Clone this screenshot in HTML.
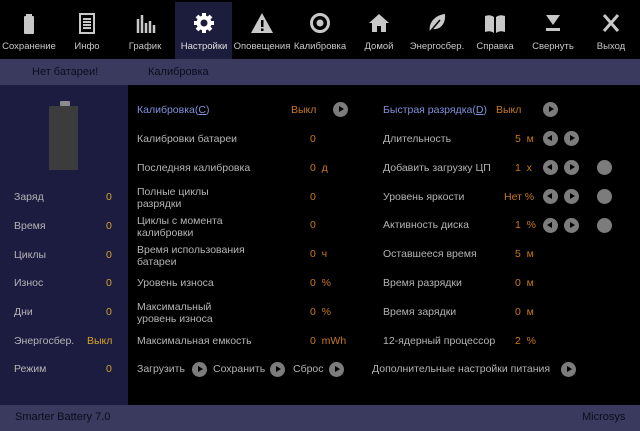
<!DOCTYPE html>
<html><head><meta charset="utf-8"><style>
*{margin:0;padding:0;box-sizing:border-box}
body{width:640px;height:429px;background:#000;position:relative;overflow:hidden;font-family:"Liberation Sans",sans-serif;font-size:10.5px;color:#b4b4b4}
.a{position:absolute;white-space:nowrap}
.tb{position:absolute;top:0;height:57px;width:58px;text-align:center;font-family:"Liberation Sans",sans-serif;font-size:9.5px;color:#c8c8c8}
.tb span{position:absolute;top:39px;left:-10px;right:-10px;text-align:center}
.tb svg{position:absolute;left:17px;top:9px}
.o{color:#c8781e}
.y{color:#d4a428}
.b{color:#8090dc}
.btn{position:absolute;width:15px;height:15px;border-radius:50%;background:#7c7c7c}
.btn.r::after{content:"";position:absolute;left:6px;top:4px;border-left:5px solid #000;border-top:3.5px solid transparent;border-bottom:3.5px solid transparent}
.btn.l::after{content:"";position:absolute;left:4px;top:4px;border-right:5px solid #000;border-top:3.5px solid transparent;border-bottom:3.5px solid transparent}
.dot{position:absolute;width:15px;height:15px;border-radius:50%;background:#7c7c7c}
.m{margin-top:2px}
</style></head><body>
<div class="a" style="left:175px;top:0;width:57px;height:57px;background:#1c1c3c"></div>
<div class="tb" style="left:0"><svg width="24" height="24"><rect x="9" y="3" width="6" height="3" fill="#c8c8c8"/><rect x="7" y="5" width="10" height="18" rx="1" fill="#c8c8c8"/></svg><span>Сохранение</span></div>
<div class="tb" style="left:58px"><svg width="24" height="24"><rect x="5" y="3" width="14" height="19" fill="none" stroke="#c8c8c8" stroke-width="2"/><path d="M8 8h8M8 11h8M8 14h8M8 17h8" stroke="#c8c8c8" stroke-width="2"/></svg><span>Инфо</span></div>
<div class="tb" style="left:116px"><svg width="24" height="24"><path d="M5 8v14M9 4v18M13 12v10M17 10v12M21 14v8" stroke="#c8c8c8" stroke-width="2.5"/></svg><span>График</span></div>
<div class="tb" style="left:175px;color:#e0e0e0"><svg width="24" height="24" viewBox="0 0 24 24"><g fill="#fff"><circle cx="12" cy="12" r="7.5"/><g stroke="#fff" stroke-width="4"><path d="M12 2v20M2 12h20M5 5l14 14M19 5L5 19"/></g></g><circle cx="12" cy="12" r="3.5" fill="#1c1c3c"/></svg><span>Настройки</span></div>
<div class="tb" style="left:233px"><svg width="24" height="24"><path d="M12 2L23 22H1z" fill="#c8c8c8"/><rect x="11" y="9" width="2.5" height="7" fill="#000"/><rect x="11" y="17.5" width="2.5" height="2.5" fill="#000"/></svg><span>Оповещения</span></div>
<div class="tb" style="left:291px"><svg width="24" height="24"><circle cx="12" cy="12" r="8.5" fill="none" stroke="#c8c8c8" stroke-width="3"/><circle cx="12" cy="12" r="3.5" fill="#c8c8c8"/></svg><span>Калибровка</span></div>
<div class="tb" style="left:350px"><svg width="24" height="24"><path d="M12 3L2 12h3v9h5v-6h4v6h5v-9h3z" fill="#c8c8c8"/></svg><span>Домой</span></div>
<div class="tb" style="left:408px"><svg width="24" height="24"><path d="M5 21C3 12 10 4 20 3c1 10-5 16-12 15z" fill="#c8c8c8"/><path d="M3 23L15 9" stroke="#000" stroke-width="1.5"/></svg><span>Энергосбер.</span></div>
<div class="tb" style="left:466px"><svg width="24" height="24"><path d="M2 5q5-2 9 1v16q-4-3-9-1zM22 5q-5-2-9 1v16q4-3 9-1z" fill="#c8c8c8"/></svg><span>Справка</span></div>
<div class="tb" style="left:524px"><svg width="24" height="24"><path d="M5 4h14l-7 10z" fill="#c8c8c8"/><rect x="5" y="17" width="14" height="3" fill="#c8c8c8"/></svg><span>Свернуть</span></div>
<div class="tb" style="left:582px"><svg width="24" height="24"><path d="M5 4l14 16M19 4L5 20" stroke="#c8c8c8" stroke-width="3"/></svg><span>Выход</span></div>

<div class="a" style="left:0;top:57px;width:640px;height:26px;background:#3a3a5e"></div>
<div class="a" style="left:32px;top:64px;color:#0c0c1c;font-size:11px">Нет батареи!</div>
<div class="a" style="left:148px;top:64px;color:#0c0c1c;font-size:11px">Калибровка</div>

<div class="a" style="left:0;top:83px;width:128px;height:320px;background:#1c1c40"></div>
<div class="a" style="left:60px;top:99px;width:10px;height:5px;background:#8c8c8c;border-radius:1px"></div>
<div class="a" style="left:49px;top:104px;width:29px;height:64px;background:#3c3c3c"></div>

<div class="m">
<div class="a" style="left:14px;top:189px">Заряд</div><div class="a y" style="left:106px;top:189px">0</div>
<div class="a" style="left:14px;top:218px">Время</div><div class="a y" style="left:106px;top:218px">0</div>
<div class="a" style="left:14px;top:247px">Циклы</div><div class="a y" style="left:106px;top:247px">0</div>
<div class="a" style="left:14px;top:275px">Износ</div><div class="a y" style="left:106px;top:275px">0</div>
<div class="a" style="left:14px;top:304px">Дни</div><div class="a y" style="left:106px;top:304px">0</div>
<div class="a" style="left:14px;top:333px">Энергосбер.</div><div class="a y" style="left:87px;top:333px">Выкл</div>
<div class="a" style="left:14px;top:361px">Режим</div><div class="a y" style="left:106px;top:361px">0</div>

<div class="a b" style="left:137px;top:102px">Калибровка(<u>C</u>)</div><div class="a o" style="left:291px;top:102px">Выкл</div>
<div class="a" style="left:137px;top:131px">Калибровки батареи</div><div class="a o" style="left:310px;top:131px">0</div>
<div class="a" style="left:137px;top:160px">Последняя калибровка</div><div class="a o" style="left:310px;top:160px">0&nbsp;&nbsp;д</div>
<div class="a" style="left:137px;top:184px;line-height:12px">Полные циклы<br>разрядки</div><div class="a o" style="left:310px;top:189px">0</div>
<div class="a" style="left:137px;top:213px;line-height:12px">Циклы с момента<br>калибровки</div><div class="a o" style="left:310px;top:217px">0</div>
<div class="a" style="left:137px;top:242px;line-height:12px">Время использования<br>батареи</div><div class="a o" style="left:310px;top:246px">0&nbsp;&nbsp;ч</div>
<div class="a" style="left:137px;top:275px">Уровень износа</div><div class="a o" style="left:310px;top:275px">0&nbsp;&nbsp;%</div>
<div class="a" style="left:137px;top:299px;line-height:12px">Максимальный<br>уровень износа</div><div class="a o" style="left:310px;top:304px">0&nbsp;&nbsp;%</div>
<div class="a" style="left:137px;top:333px">Максимальная емкость</div><div class="a o" style="left:310px;top:333px">0&nbsp;&nbsp;mWh</div>
<div class="a" style="left:137px;top:361px">Загрузить</div>
<div class="a" style="left:213px;top:361px">Сохранить</div>
<div class="a" style="left:293px;top:361px">Сброс</div>

<div class="a b" style="left:383px;top:102px">Быстрая разрядка(<u>D</u>)</div><div class="a o" style="left:496px;top:102px">Выкл</div>
<div class="a" style="left:383px;top:131px">Длительность</div><div class="a o" style="left:515px;top:131px">5&nbsp;&nbsp;м</div>
<div class="a" style="left:383px;top:160px">Добавить загрузку ЦП</div><div class="a o" style="left:515px;top:160px">1&nbsp;&nbsp;x</div>
<div class="a" style="left:383px;top:189px">Уровень яркости</div><div class="a o" style="left:504px;top:189px">Нет&nbsp;%</div>
<div class="a" style="left:383px;top:217px">Активность диска</div><div class="a o" style="left:515px;top:217px">1&nbsp;&nbsp;%</div>
<div class="a" style="left:383px;top:246px">Оставшееся время</div><div class="a o" style="left:515px;top:246px">5&nbsp;&nbsp;м</div>
<div class="a" style="left:383px;top:275px">Время разрядки</div><div class="a o" style="left:515px;top:275px">0&nbsp;&nbsp;м</div>
<div class="a" style="left:383px;top:304px">Время зарядки</div><div class="a o" style="left:515px;top:304px">0&nbsp;&nbsp;м</div>
<div class="a" style="left:383px;top:333px">12-ядерный процессор</div><div class="a o" style="left:515px;top:333px">2&nbsp;&nbsp;%</div>
<div class="a" style="left:372px;top:361px">Дополнительные настройки питания</div>
</div>

<div class="btn r" style="left:333px;top:100px"></div>
<div class="btn r" style="left:192px;top:360px"></div>
<div class="btn r" style="left:270px;top:360px"></div>
<div class="btn r" style="left:329px;top:360px"></div>
<div class="btn r" style="left:543px;top:100px"></div>
<div class="btn l" style="left:543px;top:129px"></div><div class="btn r" style="left:564px;top:129px"></div>
<div class="btn l" style="left:543px;top:158px"></div><div class="btn r" style="left:564px;top:158px"></div><div class="dot" style="left:597px;top:158px"></div>
<div class="btn l" style="left:543px;top:187px"></div><div class="btn r" style="left:564px;top:187px"></div><div class="dot" style="left:597px;top:187px"></div>
<div class="btn l" style="left:543px;top:216px"></div><div class="btn r" style="left:564px;top:216px"></div><div class="dot" style="left:597px;top:216px"></div>
<div class="btn r" style="left:561px;top:360px"></div>

<div class="a" style="left:0;top:403px;width:640px;height:26px;background:#3a3a5e"></div>
<div class="a" style="left:15px;top:409px;color:#0c0c1c;font-size:11px">Smarter Battery 7.0</div>
<div class="a" style="left:582px;top:409px;color:#0c0c1c;font-size:11px">Microsys</div>
</body></html>
